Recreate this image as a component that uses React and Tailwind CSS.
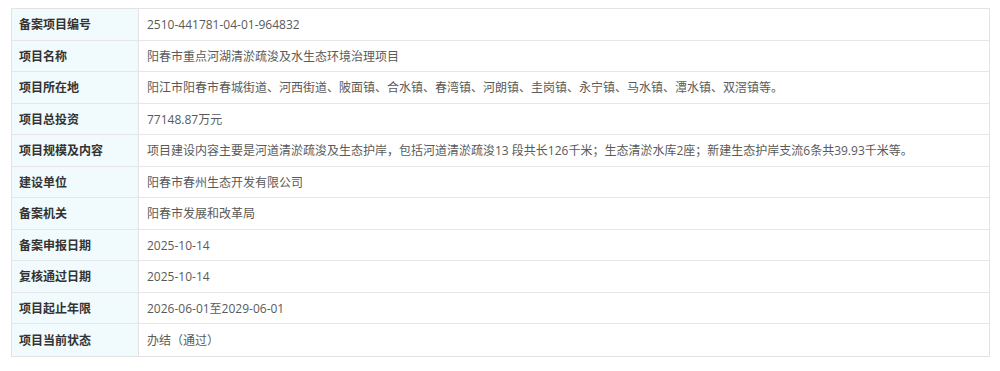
const rows = [
  ['备案项目编号', '2510-441781-04-01-964832'],
  ['项目名称', '阳春市重点河湖清淤疏浚及水生态环境治理项目'],
  ['项目所在地', '阳江市阳春市春城街道、河西街道、陂面镇、合水镇、春湾镇、河朗镇、圭岗镇、永宁镇、马水镇、潭水镇、双滘镇等。'],
  ['项目总投资', '77148.87万元'],
  ['项目规模及内容', '项目建设内容主要是河道清淤疏浚及生态护岸，包括河道清淤疏浚13 段共长126千米；生态清淤水库2座；新建生态护岸支流6条共39.93千米等。'],
  ['建设单位', '阳春市春州生态开发有限公司'],
  ['备案机关', '阳春市发展和改革局'],
  ['备案申报日期', '2025-10-14'],
  ['复核通过日期', '2025-10-14'],
  ['项目起止年限', '2026-06-01至2029-06-01'],
  ['项目当前状态', '办结（通过）'],
]

export default function App() {
  return (
    <div className="w-[1000px] h-[371px] bg-white pt-2 pl-[11px] font-['Open_Sans','Noto_Sans_CJK_SC',sans-serif] text-[12px]">
      <div className="w-[979px] border border-[#e3e3e3] flex flex-col">
        {rows.map((row, i) => (
          <div key={i} className={'flex flex-row h-[31.5px] ' + (i < rows.length - 1 ? 'border-b border-[#e6e6e6]' : '')}>
            <div className="w-[127px] shrink-0 bg-[#f1fafc] border-r border-[#e3e3e3] flex items-center pl-[7px] pt-[2px] font-bold text-[#333]">
              {row[0]}
            </div>
            <div className="flex-1 flex items-center pl-[8px] pt-[2px] text-[#5a5a5a]">
              {row[1]}
            </div>
          </div>
        ))}
      </div>
    </div>
  )
}
